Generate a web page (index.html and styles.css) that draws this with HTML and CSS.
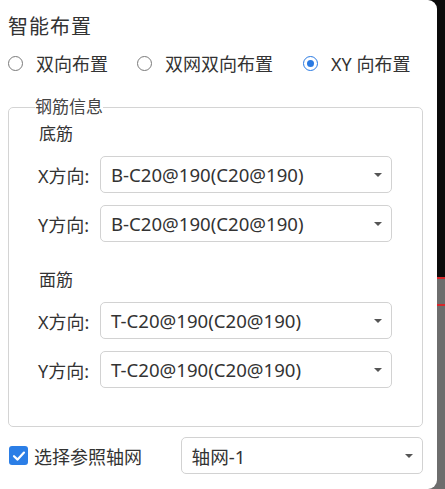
FILE: index.html
```html
<!DOCTYPE html>
<html lang="zh">
<head>
<meta charset="utf-8">
<link rel="stylesheet" href="styles.css">
</head>
<body>
<div class="panel">
  <div class="title">智能布置</div>
  <div class="radios">
    <label class="radio"><span class="dot"></span><span>双向布置</span></label>
    <label class="radio r2"><span class="dot"></span><span>双网双向布置</span></label>
    <label class="radio r3"><span class="dot on"></span><span>XY 向布置</span></label>
  </div>
  <fieldset class="group">
    <legend>钢筋信息</legend>
    <div class="sub">底筋</div>
    <div class="row first"><span class="lbl">X方向:</span><div class="sel"><span>B-C20@190(C20@190)</span><i class="caret"></i></div></div>
    <div class="row"><span class="lbl">Y方向:</span><div class="sel"><span>B-C20@190(C20@190)</span><i class="caret"></i></div></div>
    <div class="sub sub2">面筋</div>
    <div class="row first"><span class="lbl">X方向:</span><div class="sel"><span>T-C20@190(C20@190)</span><i class="caret"></i></div></div>
    <div class="row"><span class="lbl">Y方向:</span><div class="sel"><span>T-C20@190(C20@190)</span><i class="caret"></i></div></div>
  </fieldset>
  <div class="bottom">
    <label class="check"><span class="box"><svg viewBox="0 0 18 18" width="18" height="18"><path d="M4 9.2 L7.6 12.6 L14 5.6" fill="none" stroke="#fff" stroke-width="2.2" stroke-linecap="round" stroke-linejoin="round"/></svg></span><span>选择参照轴网</span></label>
    <div class="sel axis"><span>轴网-1</span><i class="caret"></i></div>
  </div>
</div>
</body>
</html>
```
FILE: styles.css
```css
html, body { margin: 0; padding: 0; }
body {
  width: 445px; height: 489px; overflow: hidden;
  font-family: "Noto Sans", "Noto Sans CJK SC", sans-serif;
  color: #333;
  background: linear-gradient(to bottom, #0b0b0b 0, #0b0b0b 277px, #d8262a 277px, #d8262a 279px, #6d6d6d 279px, #6d6d6d 304px, #d8262a 304px, #d8262a 306px, #6d6d6d 306px);
}
.panel {
  width: 437px; height: 489px; box-sizing: border-box;
  background: #fff;
  border-radius: 0 9px 9px 0;
  padding: 13px 14px 0 8px;
}
.title { font-size: 20px; line-height: 28px; height: 28px; letter-spacing: 1px; }
.radios { display: flex; align-items: center; height: 24px; margin-top: 10px; font-size: 18px; }
.radio { display: flex; align-items: center; gap: 13px; }
.r2 { margin-left: 29px; }
.r3 { margin-left: 30px; }
.dot {
  width: 15px; height: 15px; box-sizing: border-box; border-radius: 50%;
  border: 1px solid #7a7a7a; background: #fff; display: inline-block; position: relative;
}
.dot.on { border-color: #2a7ae2; }
.dot.on::after {
  content: ""; position: absolute; left: 3px; top: 3px; width: 7px; height: 7px; border-radius: 50%; background: #2a7ae2;
}
.group {
  margin: 22px 0 0 0; width: 415px; box-sizing: border-box;
  border: 1px solid #d4d4d4; border-radius: 5px;
  padding: 5px 0 38px 29px;
}
.group legend {
  font-size: 17px; line-height: 20px; color: #444; padding: 0; margin-left: -3px;
}
.sub { font-size: 17px; line-height: 24px; height: 24px; color: #333; padding-left: 1px; }
.sub2 { margin-top: 26px; }
.row { display: flex; align-items: center; margin-top: 12px; }
.row.first { margin-top: 10px; }
.lbl { width: 62px; font-size: 18px; color: #333; }
.sel {
  width: 292px; height: 37px; box-sizing: border-box;
  border: 1px solid #d2d2d2; border-radius: 5px;
  display: flex; align-items: center; justify-content: space-between;
  padding: 0 9px 0 10px; font-size: 18.6px; color: #333;
}
.caret {
  width: 0; height: 0; border-left: 4px solid transparent; border-right: 4px solid transparent;
  border-top: 4px solid #555;
}
.bottom { display: flex; align-items: center; margin-top: 10px; }
.check { display: flex; align-items: center; gap: 6px; font-size: 18px; width: 172px; padding-left: 1px; }
.box { width: 19px; height: 19px; border-radius: 3px; background: #2b7ee6; display: flex; align-items: center; justify-content: center; }
.sel.axis { width: 243px; padding-left: 10px; }
```
